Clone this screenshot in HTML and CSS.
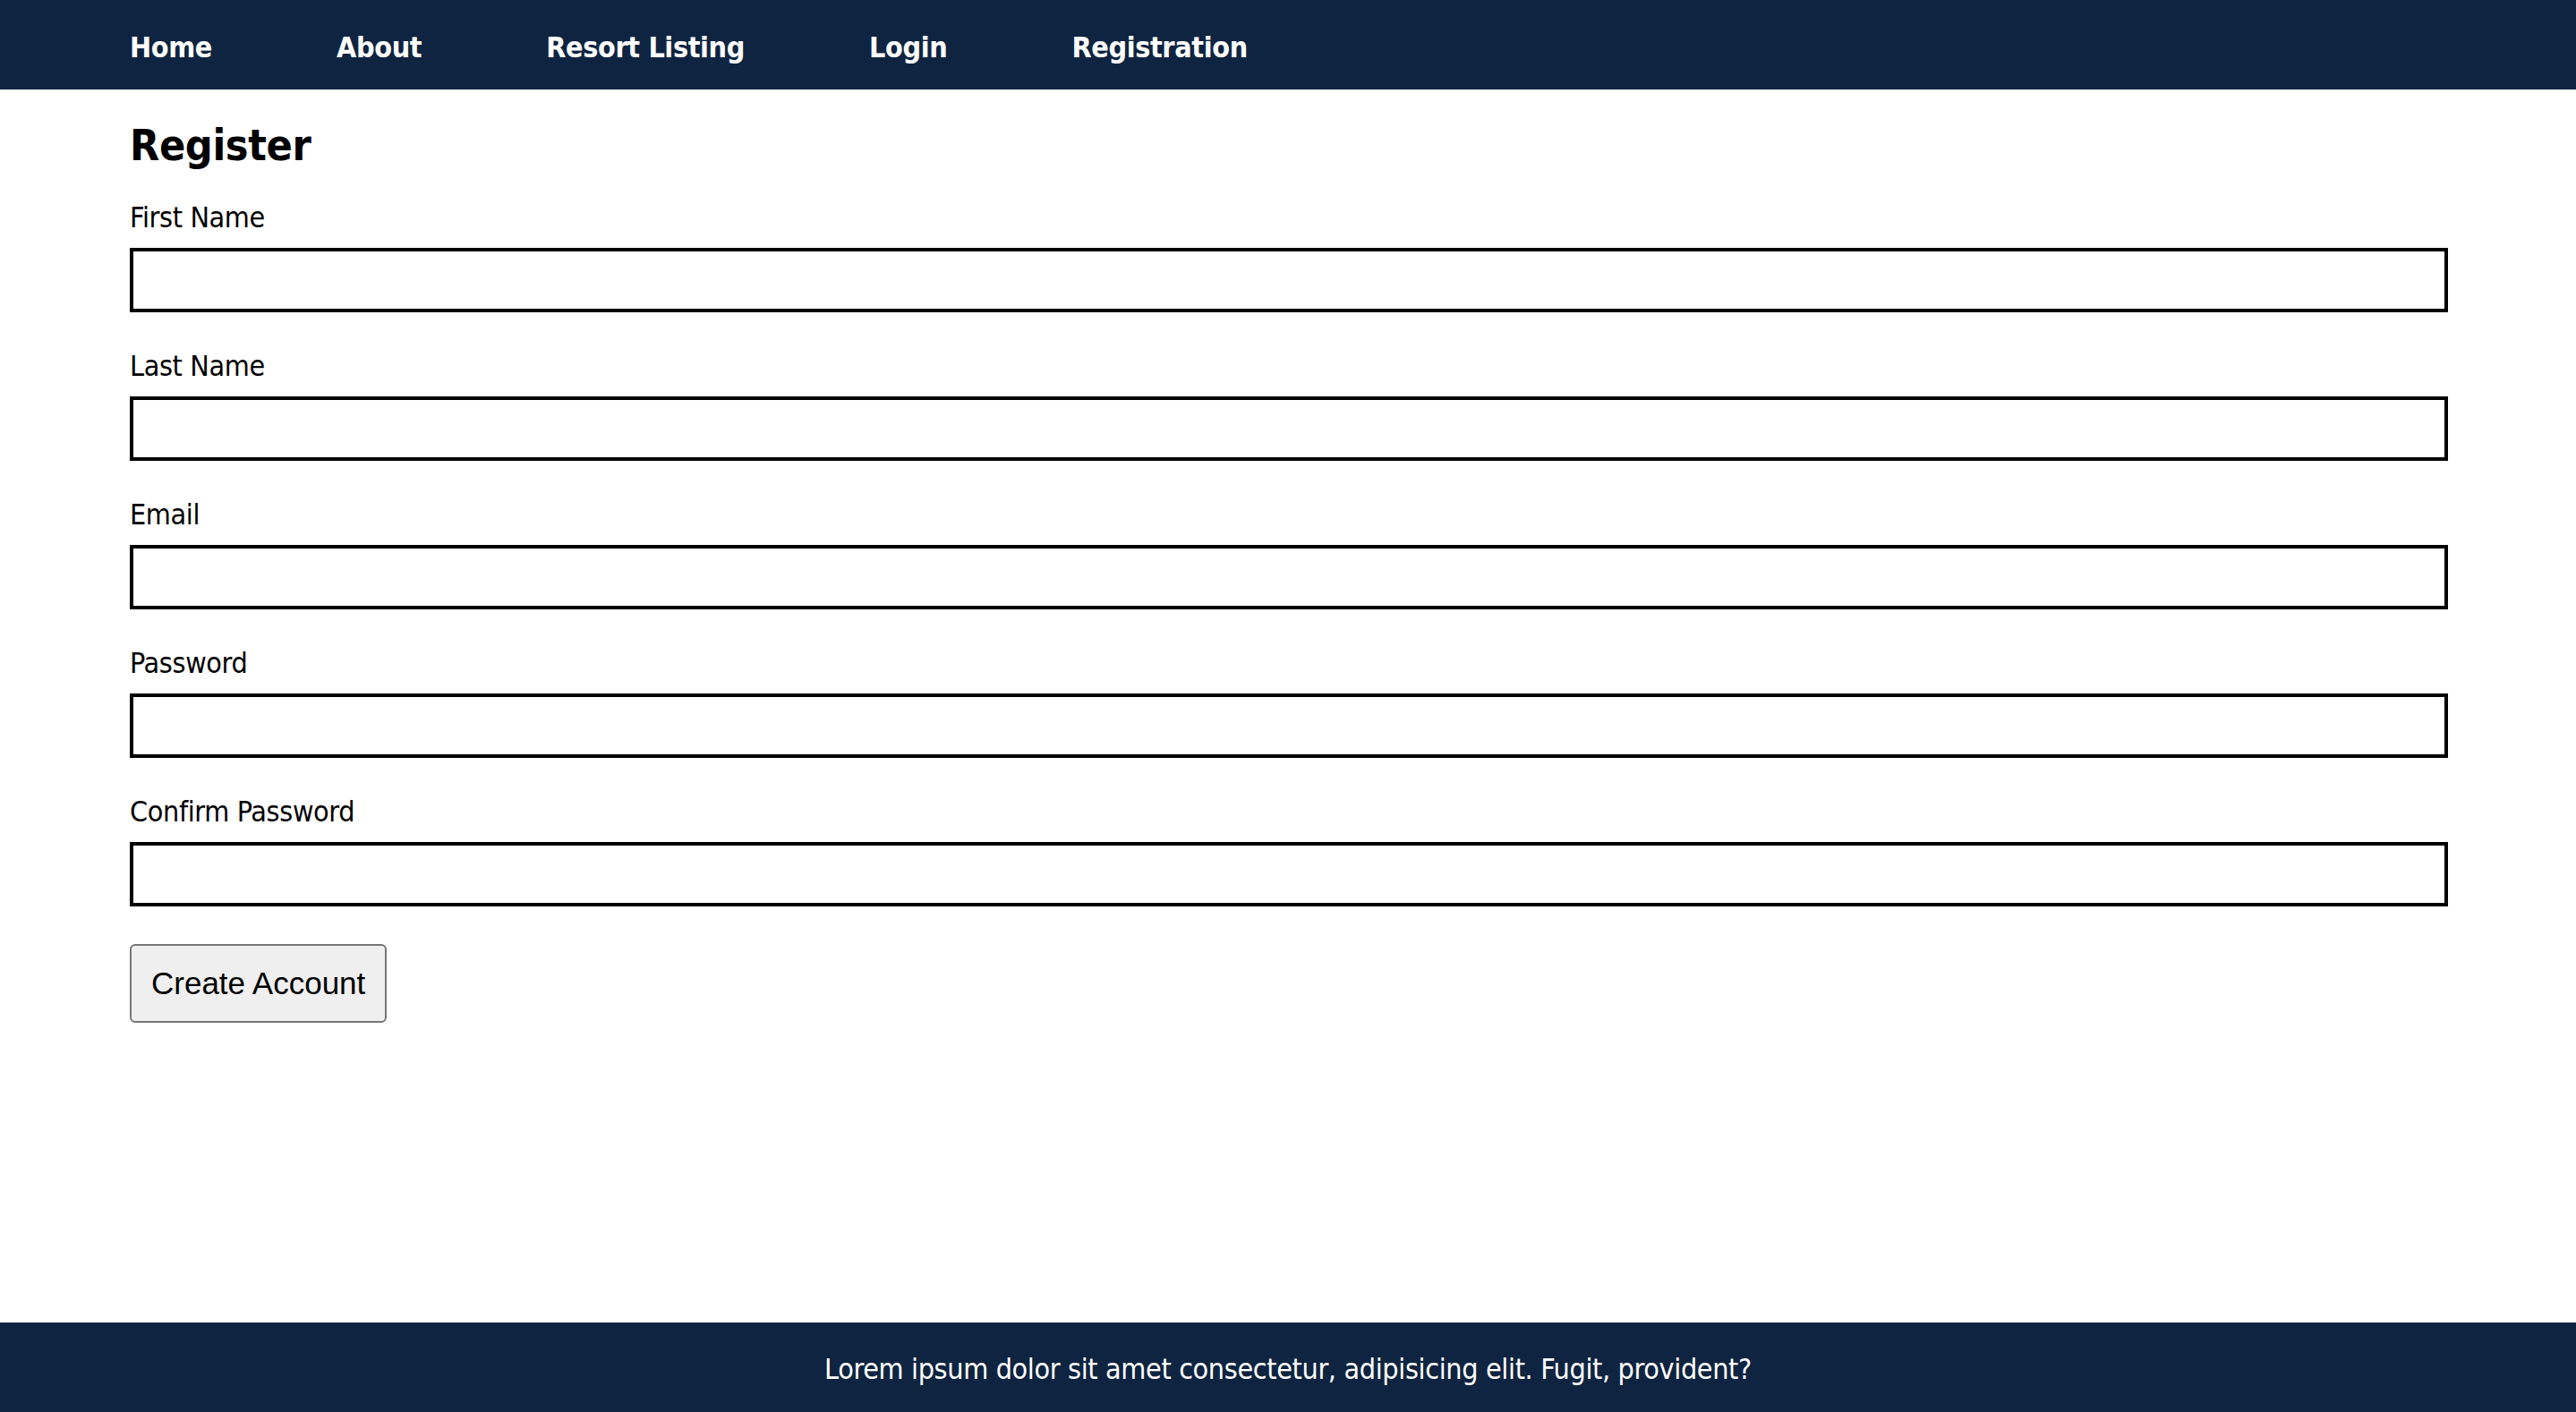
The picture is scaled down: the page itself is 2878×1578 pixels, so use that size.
FILE: index.html
```html
<!DOCTYPE html>
<html lang="en">
<head>
<meta charset="utf-8">
<title>Register</title>
<link rel="stylesheet" href="styles.css">
</head>
<body>
<nav class="nav">
  <a class="nav-link" href="#">Home</a>
  <a class="nav-link" href="#">About</a>
  <a class="nav-link" href="#">Resort Listing</a>
  <a class="nav-link" href="#">Login</a>
  <a class="nav-link" href="#">Registration</a>
</nav>
<main class="main">
  <h2 class="title">Register</h2>
  <form class="form">
    <div class="field">
      <label class="label" for="fn">First Name</label>
      <input class="input" id="fn" type="text">
    </div>
    <div class="field">
      <label class="label" for="ln">Last Name</label>
      <input class="input" id="ln" type="text">
    </div>
    <div class="field">
      <label class="label" for="em">Email</label>
      <input class="input" id="em" type="email">
    </div>
    <div class="field">
      <label class="label" for="pw">Password</label>
      <input class="input" id="pw" type="password">
    </div>
    <div class="field">
      <label class="label" for="cpw">Confirm Password</label>
      <input class="input" id="cpw" type="password">
    </div>
    <div class="actions">
      <button class="btn" type="button">Create Account</button>
    </div>
  </form>
</main>
<footer class="footer">
  <p class="footer-text">Lorem ipsum dolor sit amet consectetur, adipisicing elit. Fugit, provident?</p>
</footer>
</body>
</html>
```
FILE: styles.css
```css
* { box-sizing: border-box; }
html, body { margin: 0; padding: 0; }
body {
  min-height: 100vh;
  display: flex;
  flex-direction: column;
  font-family: "DejaVu Sans Condensed", "DejaVu Sans", sans-serif;
  font-stretch: condensed;
  font-size: 32px;
  letter-spacing: -0.35px;
  color: #000;
  background: #fff;
}
.nav {
  background: #0f2440;
  height: 100px;
  display: flex;
  align-items: center;
  gap: 139px;
  padding: 6px 145px 0;
}
.nav-link {
  color: #fff;
  text-decoration: none;
  font-weight: bold;
  font-size: 32px;
  line-height: 37px;
}
.main {
  flex: 1;
  padding: 34px 143px 0 145px;
}
.title {
  margin: 0 0 35px;
  font-size: 48px;
  line-height: 56px;
  font-weight: bold;
}
.form {
  display: flex;
  flex-direction: column;
  gap: 42px;
}
.field {
  display: flex;
  flex-direction: column;
}
.label {
  font-size: 32px;
  line-height: 37px;
  margin-bottom: 15px;
}
.input {
  width: 100%;
  height: 72px;
  border: 4px solid #000;
  border-radius: 0;
  padding: 0 8px;
  font-size: 32px;
  background: #fff;
}
.actions { display: flex; }
.btn {
  font-family: "Liberation Sans", Arial, sans-serif;
  font-size: 35px;
  letter-spacing: 0;
  line-height: 40px;
  padding: 22px 22px;
  background: #efefef;
  border: 2px solid #767676;
  border-radius: 6px;
  color: #000;
}
.footer {
  background: #0f2440;
  height: 100px;
  display: flex;
  align-items: center;
  justify-content: center;
  padding-top: 5px;
}
.footer-text {
  margin: 0;
  color: #fff;
  font-size: 32px;
  line-height: 37px;
}
```
